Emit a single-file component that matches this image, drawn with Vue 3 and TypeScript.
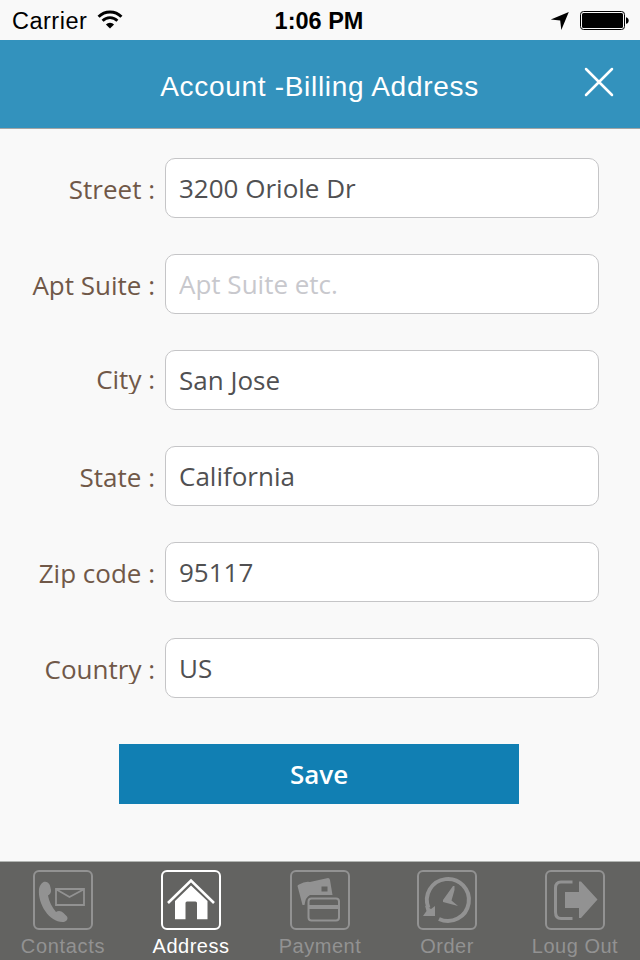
<script setup lang="ts">
import { ref } from 'vue'

interface Field {
  id: string
  label: string
  value: string
  placeholder?: string
}

type TabId = 'contacts' | 'address' | 'payment' | 'order' | 'logout'

interface Tab {
  id: TabId
  label: string
}

const fields = ref<Field[]>([
  { id: 'street', label: 'Street :', value: '3200 Oriole Dr' },
  { id: 'apt', label: 'Apt Suite :', value: '', placeholder: 'Apt Suite etc.' },
  { id: 'city', label: 'City :', value: 'San Jose' },
  { id: 'state', label: 'State :', value: 'California' },
  { id: 'zip', label: 'Zip code :', value: '95117' },
  { id: 'country', label: 'Country :', value: 'US' },
])

const tabs: Tab[] = [
  { id: 'contacts', label: 'Contacts' },
  { id: 'address', label: 'Address' },
  { id: 'payment', label: 'Payment' },
  { id: 'order', label: 'Order' },
  { id: 'logout', label: 'Loug Out' },
]

const active = ref<TabId>('address')
</script>

<template>
  <div class="screen">
    <div class="status">
      <div class="status-left">
        <span class="carrier">Carrier</span>
        <svg class="wifi" width="26" height="20" viewBox="0 0 26 20">
          <path d="M1.6 6.7A16 16 0 0 1 24.4 6.7" fill="none" stroke="#000" stroke-width="3" />
          <path d="M5.6 10.8A10.4 10.4 0 0 1 20.4 10.8" fill="none" stroke="#000" stroke-width="2.8" />
          <path d="M13 18.6L8.9 14.5A5.8 5.8 0 0 1 17.1 14.5Z" fill="#000" />
        </svg>
      </div>
      <span class="time">1:06 PM</span>
      <div class="status-right">
        <svg width="20" height="20" viewBox="0 0 20 20">
          <path d="M18.8 1L11.3 19L10.2 9.6L.8 8.6Z" fill="#000" />
        </svg>
        <svg width="50" height="20" viewBox="0 0 50 20">
          <rect x=".5" y=".5" width="44" height="18" rx="3" fill="none" stroke="#000" />
          <rect x="2" y="2" width="41" height="15" rx="1.5" fill="#000" />
          <path d="M46 6.200C49.600 6.800 49.600 12.200 46 12.800Z" fill="#000" />
        </svg>
      </div>
    </div>

    <header class="nav">
      <h1 class="title">Account -Billing Address</h1>
      <button class="close" type="button" aria-label="Close">
        <svg width="30" height="30" viewBox="0 0 30 30">
          <path d="M2 2L28 28M28 2L2 28" fill="none" stroke="#fff" stroke-width="2.5" stroke-linecap="round" />
        </svg>
      </button>
    </header>

    <main class="form">
      <div v-for="field in fields" :key="field.id" class="row">
        <label :for="field.id" class="label" :class="{ raised: field.id === 'city' }">{{ field.label }}</label>
        <input :id="field.id" v-model="field.value" class="input" type="text" :placeholder="field.placeholder" />
      </div>
      <button class="save" type="button">Save</button>
    </main>

    <nav class="tabs">
      <button
        v-for="tab in tabs"
        :key="tab.id"
        type="button"
        class="tab"
        :class="[tab.id, { active: tab.id === active }]"
        @click="active = tab.id"
      >
        <svg class="icon" width="60" height="60" viewBox="0 0 60 60">
          <rect x="1" y="1" width="58" height="58" rx="5" fill="none" stroke="currentColor" stroke-width="2" />
          <template v-if="tab.id === 'contacts'">
            <path
              d="M10.500 12C13 11 16 12.500 17 15.500L18 20C18.400 22.500 17 24.500 15 25.500C16 31.500 19 37.500 23 42C25 40.300 28.500 40.600 30.500 43L34 46.500C35.500 49 33.500 51.500 30.500 52C17.500 53 4.500 35 6 19C6.500 16 8 13.500 10.500 12Z"
              fill="currentColor"
            />
            <path d="M23 19H51V35H23ZM23.500 19.500L36.500 27L50.500 19.500" fill="none" stroke="currentColor" stroke-width="1.800" />
          </template>
          <template v-else-if="tab.id === 'address'">
            <path d="M7 33L30 10.500L53 33" fill="none" stroke="currentColor" stroke-width="2.600" />
            <path d="M30 15.500L46.500 31V49.300H36V33Q36 31.500 34.500 31.500H26Q24.500 31.500 24.500 33V49.300H14V31Z" fill="currentColor" />
          </template>
          <template v-else-if="tab.id === 'payment'">
            <path
              fill-rule="evenodd"
              d="M9 14.500Q15 11 20 12L38 8Q39.500 8 40 10L42.500 25H20Q15.500 27 14.500 35H12.500L7.500 16Q7.500 15 9 14.500ZM31.500 16.500V21.500H37.500V16.500Z"
              fill="currentColor"
            />
            <rect x="17" y="27" width="33.500" height="25" rx="4" fill="#636361" />
            <rect x="18.500" y="28.500" width="30.500" height="22" rx="3" fill="none" stroke="currentColor" stroke-width="2" />
            <path d="M18 37H49" stroke="currentColor" stroke-width="4" />
          </template>
          <template v-else-if="tab.id === 'order'">
            <path d="M11.500 38A21 21 0 1 1 22 49" fill="none" stroke="currentColor" stroke-width="4" />
            <path d="M8 35.500L14 39L18 36V46H6L9.500 41Z" fill="currentColor" />
            <path d="M36 16H37.500V20L34.500 30.500L41 36L26 32V30Z" fill="currentColor" />
          </template>
          <template v-else>
            <path d="M27.500 12H16Q10.500 12 10.500 18V42Q10.500 48.500 16 48.500H27.500" fill="none" stroke="currentColor" stroke-width="3" />
            <path d="M20 22H34V11.500H36L52.500 29.500L36 48H34V38H20Z" fill="currentColor" />
          </template>
        </svg>
        <span class="tab-label">{{ tab.label }}</span>
      </button>
    </nav>
  </div>
</template>

<style>
body {
  margin: 0;
}
</style>

<style scoped>
.screen {
  width: 640px;
  height: 960px;
  display: flex;
  flex-direction: column;
  overflow: hidden;
  background: #f9f9f9;
  font-family: "Liberation Sans", Arial, sans-serif;
}
button {
  border: 0;
  padding: 0;
  margin: 0;
  background: none;
  font: inherit;
}
svg {
  display: block;
}
.status {
  height: 40px;
  display: grid;
  grid-template-columns: 1fr auto 1fr;
  align-items: center;
  box-sizing: border-box;
  padding: 2px 10px 0 12px;
  color: #000;
}
.status-left,
.status-right {
  display: flex;
  align-items: center;
}
.status-left {
  gap: 10px;
}
.wifi {
  margin-bottom: 2px;
}
.status-right {
  justify-content: flex-end;
  gap: 10px;
}
.carrier {
  font-size: 23.5px;
  letter-spacing: 0.5px;
}
.time {
  margin-right: 4px;
  font-size: 23.5px;
  font-weight: 700;
}
.nav {
  height: 89px;
  box-sizing: border-box;
  border-bottom: 1px solid #a3a5a5;
  background: #3392bd;
  display: grid;
  grid-template-columns: 80px 1fr 80px;
  align-items: center;
}
.title {
  grid-column: 2;
  margin: 5px 1px 0 0;
  font-size: 28px;
  font-weight: 400;
  line-height: 34px;
  letter-spacing: 0.7px;
  color: #fff;
  text-align: center;
  white-space: nowrap;
}
.close {
  justify-self: center;
  margin: 0 2px 4px 0;
}
.form {
  flex: 1;
  display: flex;
  flex-direction: column;
  gap: 36px;
  padding-top: 29px;
}
.row {
  display: flex;
  height: 60px;
  gap: 10px;
}
.label {
  width: 155px;
  height: 33px;
  margin-top: 13px;
  overflow: hidden;
  text-align: right;
  font-family: "Open Sans", sans-serif;
  font-size: 26px;
  line-height: 36px;
  color: #705848;
  white-space: nowrap;
}
.label.raised {
  margin-top: 11px;
}
.input {
  width: 434px;
  height: 60px;
  box-sizing: border-box;
  border: 1px solid #c5c5c7;
  border-radius: 10px;
  padding: 0 13px;
  outline: 0;
  background: #fff;
  font-family: "Open Sans", sans-serif;
  font-size: 26px;
  color: #505052;
}
.input::placeholder {
  color: #c8c8cd;
  opacity: 1;
}
.save {
  width: 400px;
  height: 60px;
  margin: 10px 0 0 119px;
  background: #117fb3;
  color: #fff;
  font-family: "Open Sans", sans-serif;
  font-size: 26px;
  font-weight: 600;
}
.tabs {
  height: 99px;
  box-sizing: border-box;
  border-top: 1px solid #b2b5b2;
  background: #636361;
  display: grid;
  grid-template-columns: repeat(5, 128px);
}
.tab {
  display: flex;
  flex-direction: column;
  align-items: center;
  padding: 8px 2px 0 0;
  color: #929292;
}
.tab.payment {
  padding-right: 0;
}
.tab.active {
  color: #fff;
}
.tab-label {
  margin-top: 4px;
  font-size: 20px;
  line-height: 24px;
  letter-spacing: 0.5px;
}
.contacts .tab-label {
  letter-spacing: 0.7px;
}
</style>
